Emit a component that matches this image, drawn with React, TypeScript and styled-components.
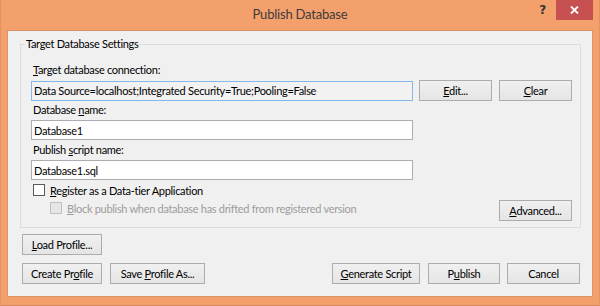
import React from "react";
import styled, { createGlobalStyle } from "styled-components";

const GlobalStyle = createGlobalStyle`
  html, body {
    margin: 0;
    padding: 0;
    background: #ffffff;
  }
  body {
    font-family: Lato, "Open Sans", "Liberation Sans", sans-serif;
    font-size: 11px;
    letter-spacing: -0.3px;
    color: #000;
  }
`;

const Window = styled.div`
  width: 600px;
  height: 306px;
  box-sizing: border-box;
  background: #f4a06c;
  box-shadow: inset 0 -1px 0 #d9885a, inset 1px 0 0 #e3935f, inset -1px 0 0 #e3935f;
  display: flex;
  flex-direction: column;
`;

const TitleBar = styled.div`
  height: 30px;
  display: grid;
  grid-template-columns: 1fr auto 1fr;
  align-items: start;
`;

const Title = styled.div`
  grid-column: 2;
  font-size: 13px;
  letter-spacing: -0.2px;
  line-height: 28px;
  color: #3c3c3c;
`;

const Controls = styled.div`
  grid-column: 3;
  justify-self: end;
  display: flex;
  align-items: flex-start;
  margin-right: 7px;
`;

const HelpGlyph = styled.div`
  font-family: "DejaVu Sans", sans-serif;
  font-weight: bold;
  font-size: 12px;
  line-height: 20px;
  color: #333;
  margin-right: 10px;
`;

const CloseButton = styled.div`
  width: 37px;
  height: 20px;
  background: #c75050;
  display: flex;
  align-items: center;
  justify-content: center;
`;

const Body = styled.div`
  flex: 1;
  margin: 0 7px 9px 7px;
  background: #f0f0f0;
  border: 1px solid #dc9466;
  padding: 4px 11px 12px 12px;
  display: flex;
  flex-direction: column;
`;

const Group = styled.fieldset`
  margin: 0;
  padding: 0;
  min-width: 0;
  border: 1px solid #dcdcdc;
`;

const Legend = styled.legend`
  margin-left: 4px;
  padding: 0 1px;
  line-height: 18px;
`;

const GroupContent = styled.div`
  padding: 9px 8px 6px 10px;
  display: flex;
  flex-direction: column;
`;

const FieldLabel = styled.div<{ $top?: number }>`
  line-height: 16px;
  padding-left: 2px;
  margin-top: ${(p) => p.$top ?? 0}px;
  margin-bottom: 2px;
`;

const Row = styled.div`
  display: flex;
  align-items: center;
`;

const TextBox = styled.input<{ $readonly?: boolean }>`
  width: 382px;
  height: 20px;
  box-sizing: border-box;
  margin: 0;
  padding: 0 2px;
  font: inherit;
  letter-spacing: inherit;
  color: #000;
  outline: none;
  border: 1px solid ${(p) => (p.$readonly ? "#85b7e8" : "#abadb3")};
  background: ${(p) => (p.$readonly ? "#f2f2f2" : "#ffffff")};
`;

const Button = styled.div<{ $w: number; $ml?: number }>`
  width: ${(p) => p.$w}px;
  height: 21px;
  box-sizing: border-box;
  margin-left: ${(p) => p.$ml ?? 0}px;
  border: 1px solid #acacac;
  background: linear-gradient(#f0f0f0, #e5e5e5);
  display: flex;
  align-items: center;
  justify-content: center;
  line-height: 16px;
  flex-shrink: 0;
`;

const CheckRow = styled.div<{ $indent: number; $disabled?: boolean }>`
  display: flex;
  align-items: center;
  height: 16px;
  padding-left: ${(p) => p.$indent}px;
  color: ${(p) => (p.$disabled ? "#9c9c9c" : "#000")};
`;

const Box = styled.span<{ $disabled?: boolean }>`
  width: 12px;
  height: 12px;
  box-sizing: border-box;
  margin-right: 5px;
  border: 1px solid ${(p) => (p.$disabled ? "#c2c2c2" : "#5a5a5a")};
  background: ${(p) => (p.$disabled ? "#e6e6e6" : "#ffffff")};
`;

const LastRow = styled.div`
  display: flex;
  justify-content: space-between;
  align-items: flex-start;
  margin-top: 2px;
`;

const ButtonRow = styled.div<{ $top: number }>`
  display: flex;
  margin: ${(p) => p.$top}px 1px 0 2px;
`;

const Spacer = styled.div`
  flex: 1;
`;

function App() {
  return (
    <>
      <GlobalStyle />
      <Window>
        <TitleBar>
          <Title>Publish Database</Title>
          <Controls>
            <HelpGlyph>?</HelpGlyph>
            <CloseButton>
              <svg width="9" height="8" viewBox="0 0 9 8">
                <path d="M1 0.5 L8 7.5 M8 0.5 L1 7.5" stroke="#fff" strokeWidth="1.8" />
              </svg>
            </CloseButton>
          </Controls>
        </TitleBar>
        <Body>
          <Group>
            <Legend>Target Database Settings</Legend>
            <GroupContent>
              <FieldLabel>
                <u>T</u>arget database connection:
              </FieldLabel>
              <Row>
                <TextBox
                  $readonly
                  readOnly
                  value="Data Source=localhost;Integrated Security=True;Pooling=False"
                />
                <Button $w={73} $ml={6}>
                  <span>
                    <u>E</u>dit...
                  </span>
                </Button>
                <Button $w={73} $ml={7}>
                  <span>
                    <u>C</u>lear
                  </span>
                </Button>
              </Row>
              <FieldLabel $top={1}>
                Database <u>n</u>ame:
              </FieldLabel>
              <TextBox readOnly value="Database1" />
              <FieldLabel $top={2}>
                Publish <u>s</u>cript name:
              </FieldLabel>
              <TextBox readOnly value="Database1.sql" />
              <CheckRow $indent={2} style={{ marginTop: 2 }}>
                <Box />
                <span>
                  <u>R</u>egister as a Data-tier Application
                </span>
              </CheckRow>
              <LastRow>
                <CheckRow $indent={19} $disabled>
                  <Box $disabled />
                  <span>
                    <u>B</u>lock publish when database has drifted from registered version
                  </span>
                </CheckRow>
                <Button $w={73}>
                  <span>
                    <u>A</u>dvanced...
                  </span>
                </Button>
              </LastRow>
            </GroupContent>
          </Group>
          <ButtonRow $top={6}>
            <Button $w={80}>
              <span>
                <u>L</u>oad Profile...
              </span>
            </Button>
          </ButtonRow>
          <ButtonRow $top={8}>
            <Button $w={80}>
              <span>
                Create Pr<u>o</u>file
              </span>
            </Button>
            <Button $w={95} $ml={8}>
              <span>
                Save <u>P</u>rofile As...
              </span>
            </Button>
            <Spacer />
            <Button $w={88}>
              <span>
                <u>G</u>enerate Script
              </span>
            </Button>
            <Button $w={72} $ml={8}>
              <span>
                P<u>u</u>blish
              </span>
            </Button>
            <Button $w={73} $ml={7}>
              Cancel
            </Button>
          </ButtonRow>
        </Body>
      </Window>
    </>
  );
}

export default App;
